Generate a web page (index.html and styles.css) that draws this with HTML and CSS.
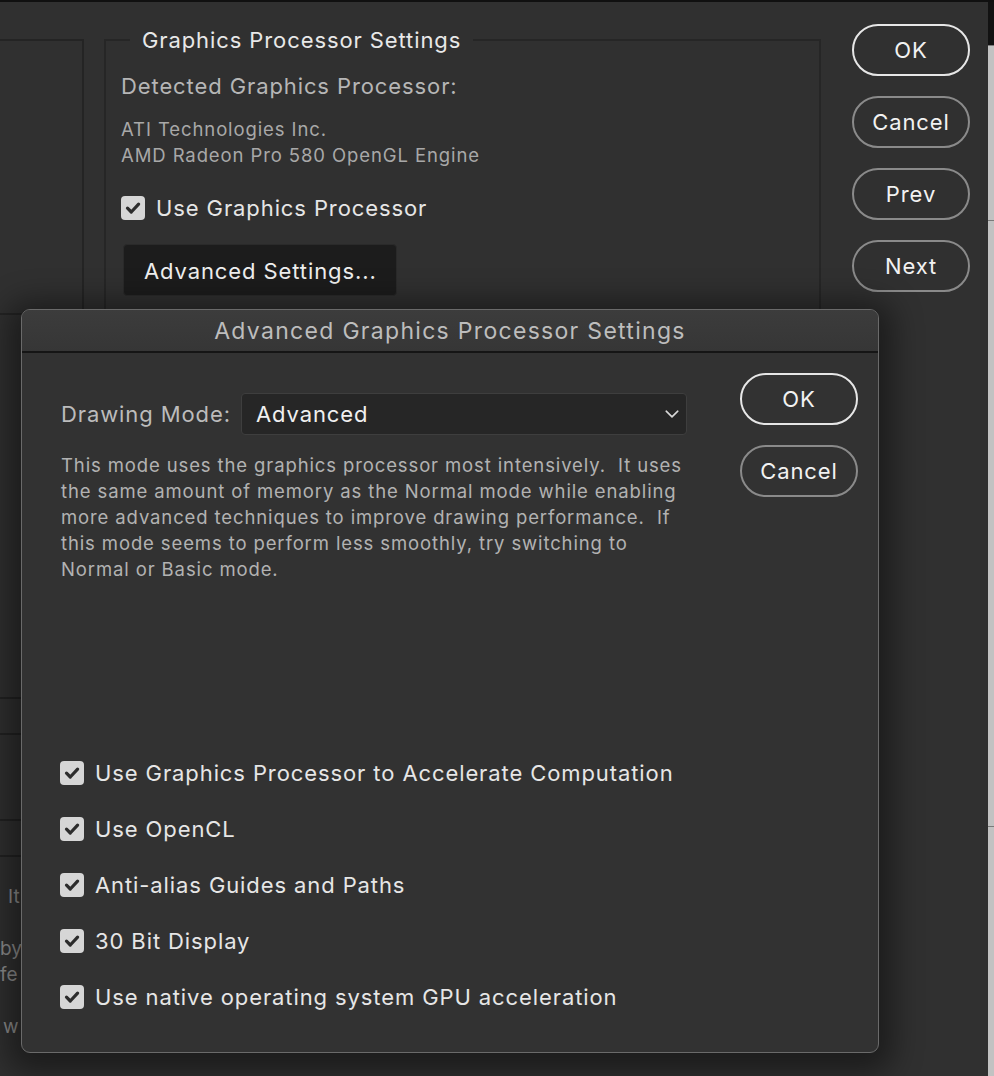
FILE: index.html
```html
<!DOCTYPE html>
<html lang="en">
<head>
<meta charset="utf-8">
<title>Advanced Graphics Processor Settings</title>
<link rel="stylesheet" href="styles.css">
</head>
<body>
<div class="screen">
  <div class="window">
    <div class="side">
      <div class="side-panel"></div>
      <div class="side-list">
        <div class="side-row"></div>
        <div class="side-gap"></div>
        <div class="side-row"></div>
      </div>
      <div class="side-text">
        <div class="frag f1">It</div>
        <div class="frag">&nbsp;</div>
        <div class="frag f2">by</div>
        <div class="frag f3">fe</div>
        <div class="frag">&nbsp;</div>
        <div class="frag f4">w</div>
      </div>
    </div>

    <fieldset class="gpu">
      <legend>Graphics Processor Settings</legend>
      <div class="detected">Detected Graphics Processor:</div>
      <div class="gpu-name">ATI Technologies Inc.<br>AMD Radeon Pro 580 OpenGL Engine</div>
      <label class="check main-check">
        <svg class="box" viewBox="0 0 24 24" width="24" height="24"><rect x="0" y="0" width="24" height="24" rx="4" fill="#d6d6d6"/><path d="M6.5 12.2 L10.3 16 L17.6 8.2" fill="none" stroke="#2c2c2c" stroke-width="3.2" stroke-linecap="round" stroke-linejoin="round"/></svg>
        <span>Use Graphics Processor</span>
      </label>
      <button class="adv-btn">Advanced Settings...</button>
    </fieldset>

    <div class="btn-col">
      <button class="pill primary">OK</button>
      <button class="pill">Cancel</button>
      <button class="pill">Prev</button>
      <button class="pill">Next</button>
    </div>
  </div>

  <div class="edge">
    <div class="edge-top"></div>
    <div class="edge-seg s1"></div>
    <div class="edge-seg s2"></div>
    <div class="edge-seg s3"></div>
  </div>

  <div class="modal">
    <div class="modal-title">Advanced Graphics Processor Settings</div>
    <div class="modal-body">
      <div class="modal-main">
        <div class="mode-row">
          <span class="mode-label">Drawing Mode:</span>
          <div class="select">
            <span>Advanced</span>
            <svg class="chev" viewBox="0 0 14 8" width="14" height="8"><path d="M1.2 1.2 L7 6.8 L12.8 1.2" fill="none" stroke="#d8d8d8" stroke-width="1.6" stroke-linecap="round" stroke-linejoin="round"/></svg>
          </div>
        </div>
        <p class="desc">This mode uses the graphics processor most intensively. &nbsp;It uses<br>the same amount of memory as the Normal mode while enabling<br>more advanced techniques to improve drawing performance. &nbsp;If<br>this mode seems to perform less smoothly, try switching to<br>Normal or Basic mode.</p>

        <div class="checks">
          <label class="check">
            <svg class="box" viewBox="0 0 24 24" width="24" height="24"><rect x="0" y="0" width="24" height="24" rx="4" fill="#d6d6d6"/><path d="M6.5 12.2 L10.3 16 L17.6 8.2" fill="none" stroke="#2c2c2c" stroke-width="3.2" stroke-linecap="round" stroke-linejoin="round"/></svg>
            <span>Use Graphics Processor to Accelerate Computation</span>
          </label>
          <label class="check">
            <svg class="box" viewBox="0 0 24 24" width="24" height="24"><rect x="0" y="0" width="24" height="24" rx="4" fill="#d6d6d6"/><path d="M6.5 12.2 L10.3 16 L17.6 8.2" fill="none" stroke="#2c2c2c" stroke-width="3.2" stroke-linecap="round" stroke-linejoin="round"/></svg>
            <span>Use OpenCL</span>
          </label>
          <label class="check">
            <svg class="box" viewBox="0 0 24 24" width="24" height="24"><rect x="0" y="0" width="24" height="24" rx="4" fill="#d6d6d6"/><path d="M6.5 12.2 L10.3 16 L17.6 8.2" fill="none" stroke="#2c2c2c" stroke-width="3.2" stroke-linecap="round" stroke-linejoin="round"/></svg>
            <span>Anti-alias Guides and Paths</span>
          </label>
          <label class="check">
            <svg class="box" viewBox="0 0 24 24" width="24" height="24"><rect x="0" y="0" width="24" height="24" rx="4" fill="#d6d6d6"/><path d="M6.5 12.2 L10.3 16 L17.6 8.2" fill="none" stroke="#2c2c2c" stroke-width="3.2" stroke-linecap="round" stroke-linejoin="round"/></svg>
            <span>30 Bit Display</span>
          </label>
          <label class="check">
            <svg class="box" viewBox="0 0 24 24" width="24" height="24"><rect x="0" y="0" width="24" height="24" rx="4" fill="#d6d6d6"/><path d="M6.5 12.2 L10.3 16 L17.6 8.2" fill="none" stroke="#2c2c2c" stroke-width="3.2" stroke-linecap="round" stroke-linejoin="round"/></svg>
            <span>Use native operating system GPU acceleration</span>
          </label>
        </div>
      </div>
      <div class="modal-btns">
        <button class="pill primary">OK</button>
        <button class="pill">Cancel</button>
      </div>
    </div>
  </div>
</div>
</body>
</html>
```

FILE: styles.css
```css
* { box-sizing: border-box; }

html, body {
  margin: 0;
  padding: 0;
  background: #303030;
}

body {
  font-family: "Inter", "Liberation Sans", sans-serif;
  font-size: 22px;
  letter-spacing: 0.9px;
  color: #e6e6e6;
}

.screen {
  position: relative;
  display: flex;
  width: 994px;
  height: 1076px;
  overflow: hidden;
  border-top: 2px solid #101010;
  background: #303030;
}

/* ---------- background dialog ---------- */
.window {
  flex: 1;
  display: flex;
  align-items: flex-start;
  padding-top: 22px;
}

.side {
  flex: none;
  width: 84px;
  margin-top: 15px;
  overflow: hidden;
}

.side-panel {
  height: 276px;
  border-top: 2px solid #242424;
  border-right: 2px solid #242424;
  border-bottom: 2px solid #242424;
}

.side-list {
  margin-top: 382px;
}

.side-row {
  height: 38px;
  border-top: 2px solid #222;
  border-bottom: 2px solid #222;
}

.side-gap {
  height: 84px;
}

.side-text {
  margin-top: 27px;
  white-space: nowrap;
  color: #8e8e8e;
  font-size: 19px;
  letter-spacing: 0;
  line-height: 26px;
}

.frag.f1 { padding-left: 8px; }
.frag.f2 { padding-left: 0; }
.frag.f3 { padding-left: 0; }
.frag.f4 { padding-left: 3px; }

.gpu {
  flex: none;
  width: 717px;
  height: 310px;
  margin: 3px 0 0 20px;
  padding: 20px 15px 0 15px;
  border: 2px solid #262626;
  min-width: 0;
}

.gpu legend {
  margin-left: 9px;
  padding: 0 12px;
  line-height: 26px;
  color: #e8e8e8;
}

.detected {
  line-height: 26px;
  color: #b6b6b6;
}

.gpu-name {
  margin-top: 17px;
  font-size: 18.5px;
  line-height: 26px;
  color: #a8a8a8;
}

.check {
  display: flex;
  align-items: center;
  gap: 11px;
  height: 26px;
  line-height: 26px;
  color: #e6e6e6;
}

.check .box {
  flex: none;
  display: block;
}

.main-check {
  margin-top: 27px;
}

.adv-btn {
  display: block;
  margin: 23px 0 0 2px;
  width: 274px;
  height: 52px;
  padding: 2px 0 0 20px;
  text-align: left;
  background: #1c1c1c;
  border: 1px solid #2a2a2a;
  border-radius: 4px;
  color: #efefef;
  font: inherit;
  letter-spacing: inherit;
}

.btn-col {
  flex: none;
  display: flex;
  flex-direction: column;
  gap: 20px;
  margin-left: 31px;
}

.pill {
  width: 118px;
  height: 52px;
  border: 2px solid #8a8a8a;
  border-radius: 26px;
  background: transparent;
  color: #f2f2f2;
  font: inherit;
  letter-spacing: inherit;
  padding: 0;
}

.pill.primary {
  border-color: #e6e6e6;
}

/* ---------- right edge ---------- */
.edge {
  flex: none;
  width: 6px;
  display: flex;
  flex-direction: column;
  background: #c2c2c2;
}

.edge-top {
  height: 43px;
  background: #121212;
}

.edge-seg { border-top: 1px solid #7a7a7a; }
.edge-seg.s1 { height: 175px; }
.edge-seg.s2 { height: 606px; }
.edge-seg.s3 { flex: 1; }

/* ---------- modal ---------- */
.modal {
  position: absolute;
  left: 21px;
  top: 307px;
  width: 858px;
  height: 744px;
  display: flex;
  flex-direction: column;
  background: #323232;
  border: 1px solid #6a6a6a;
  border-radius: 9px;
  overflow: hidden;
  box-shadow: 0 6px 30px 14px rgba(0, 0, 0, 0.42);
}

.modal-title {
  flex: none;
  height: 43px;
  line-height: 43px;
  text-align: center;
  font-size: 23px;
  letter-spacing: 1.3px;
  color: #bdbdbd;
  background: linear-gradient(#3c3c3c, #363636);
  border-bottom: 2px solid #151515;
}

.modal-body {
  flex: 1;
  display: flex;
  gap: 53px;
  padding: 20px 20px 27px 39px;
}

.modal-main {
  flex: 1;
  display: flex;
  flex-direction: column;
  padding-top: 20px;
}

.mode-row {
  display: flex;
  align-items: center;
  height: 42px;
}

.mode-label {
  flex: none;
  width: 180px;
  color: #bcbcbc;
}

.select {
  flex: none;
  width: 446px;
  height: 42px;
  display: flex;
  align-items: center;
  justify-content: space-between;
  padding: 0 7px 0 14px;
  background: #262626;
  border: 1px solid #3e3e3e;
  border-radius: 4px;
  color: #f0f0f0;
}

.chev { display: block; }

.desc {
  margin: 17px 0 0 0;
  font-size: 18.5px;
  letter-spacing: 0.88px;
  line-height: 26px;
  color: #b2b2b2;
  white-space: nowrap;
}

.checks {
  margin-top: auto;
  margin-left: -1px;
}

.checks .check {
  height: 56px;
}

.modal-btns {
  flex: none;
  display: flex;
  flex-direction: column;
  gap: 20px;
}
```
